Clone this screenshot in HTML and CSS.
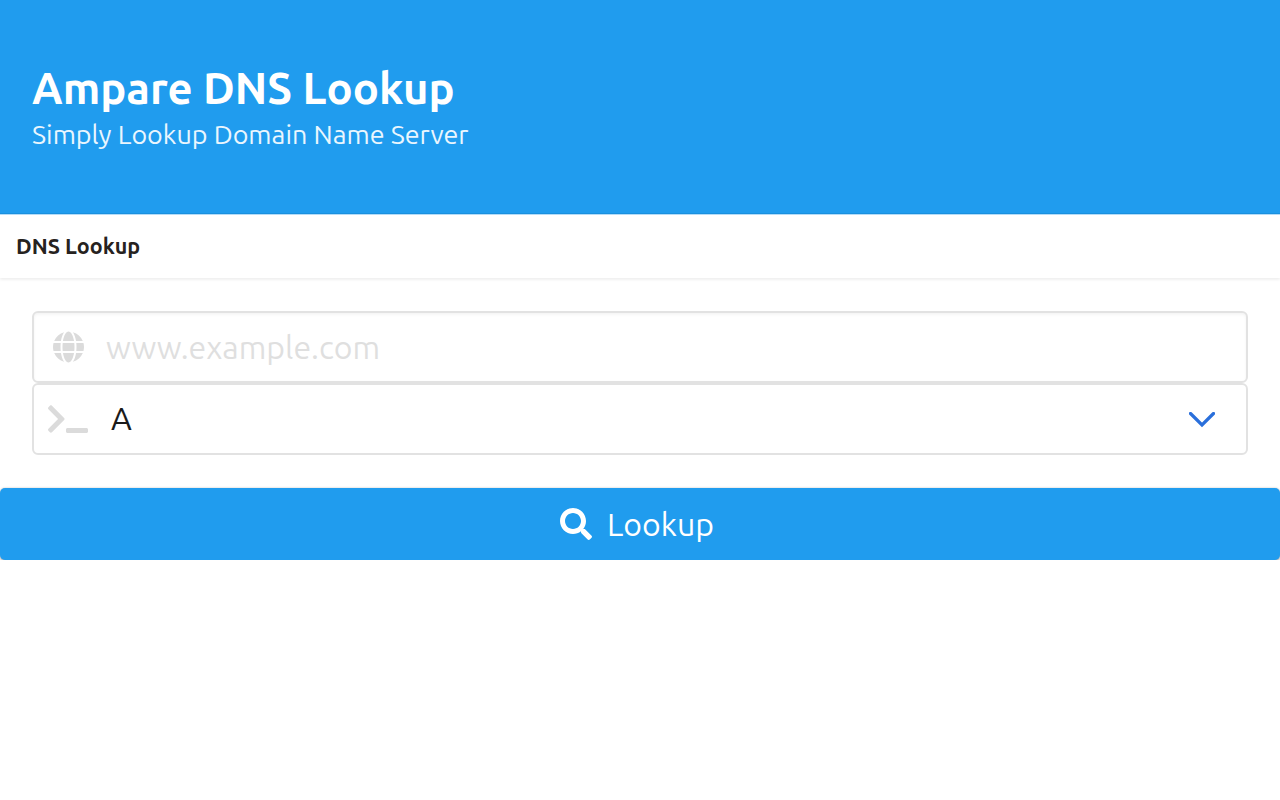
FILE: index.html
```html
<!DOCTYPE html>
<html lang="en">
<head>
<meta charset="utf-8">
<title>Ampare DNS Lookup</title>
<link rel="stylesheet" href="styles.css">
</head>
<body>
<header class="hero">
  <h1 class="hero-title">Ampare DNS Lookup</h1>
  <p class="hero-sub">Simply Lookup Domain Name Server</p>
</header>
<nav class="tabbar"><span class="tab">DNS Lookup</span></nav>
<main class="form">
  <div class="field field-input">
    <span class="icon-left"><svg viewBox="0 0 496 512" width="31" height="32"><path fill="#dbdbdb" d="M336.500 160C322 70.700 287.800 8 248 8s-74 62.700-88.500 152h177zM152 256c0 22.200 1.200 43.500 3.300 64h185.300c2.100-20.500 3.300-41.800 3.300-64s-1.200-43.500-3.300-64H155.300c-2.100 20.500-3.300 41.800-3.300 64zm324.700-96c-28.600-67.900-86.500-120.400-158-141.600 24.400 33.800 41.200 84.700 50 141.600h108zM177.200 18.400C105.800 39.600 47.800 92.100 19.300 160h108c8.700-56.900 25.500-107.800 49.900-141.600zM487.400 192H372.700c2.100 21 3.300 42.500 3.300 64s-1.200 43-3.300 64h114.600c5.500-20.500 8.600-41.800 8.600-64s-3.100-43.500-8.500-64zM120 256c0-21.500 1.200-43 3.300-64H8.600C3.200 212.500 0 233.800 0 256s3.200 43.500 8.600 64h114.600c-2-21-3.200-42.500-3.200-64zm39.500 96c14.500 89.300 48.700 152 88.500 152s74-62.700 88.500-152h-177zm159.300 141.600c71.400-21.200 129.400-73.700 158-141.600h-108c-8.800 56.900-25.600 107.800-50 141.600zM19.300 352c28.600 67.900 86.500 120.400 158 141.600-24.400-33.800-41.200-84.700-50-141.600h-108z"/></svg></span>
    <input class="input" type="text" placeholder="www.example.com">
  </div>
  <div class="field">
    <span class="icon-left"><svg viewBox="0 0 640 512" width="40" height="32"><path fill="#dbdbdb" d="M257.981 272.971L63.638 467.314c-9.373 9.373-24.569 9.373-33.941 0L7.029 444.647c-9.357-9.357-9.375-24.522-.04-33.901L161.011 256 6.990 101.255c-9.335-9.379-9.317-24.544.04-33.901l22.667-22.667c9.373-9.373 24.569-9.373 33.941 0L257.981 239.030c9.373 9.372 9.373 24.568 0 33.941zM640 456v-32c0-13.255-10.745-24-24-24H312c-13.255 0-24 10.745-24 24v32c0 13.255 10.745 24 24 24h304c13.255 0 24-10.745 24-24z"/></svg></span>
    <span class="select-value">A</span>
    <svg class="chevron" viewBox="0 0 26 16" width="26" height="16"><path d="M1.500 1.500 L13 13 L24.500 1.500" fill="none" stroke="#2a6fdb" stroke-width="3.200" stroke-linecap="round"/></svg>
  </div>
</main>
<button class="lookup" type="button">
  <svg viewBox="0 0 512 512" width="32" height="32"><path fill="#fff" d="M505 442.700L405.300 343c-4.500-4.500-10.600-7-17-7H372c27.600-35.300 44-79.700 44-128C416 93.100 322.900 0 208 0S0 93.100 0 208s93.100 208 208 208c48.300 0 92.700-16.400 128-44v16.300c0 6.400 2.500 12.500 7 17l99.700 99.700c9.400 9.400 24.600 9.400 33.900 0l28.300-28.300c9.400-9.400 9.400-24.600.1-34zM208 336c-70.700 0-128-57.200-128-128 0-70.700 57.200-128 128-128 70.700 0 128 57.200 128 128 0 70.700-57.200 128-128 128z"/></svg>
  <span>Lookup</span>
</button>
</body>
</html>
```
FILE: styles.css
```css
* { box-sizing: border-box; }
html, body { margin: 0; padding: 0; background: #fff; }
body { font-family: Ubuntu, "Noto Sans", "Open Sans", sans-serif; color: #222; }
.hero { height: 214px; background: #209cee; color: #fff; padding: 64px 32px 0; border-bottom: 1px solid #1a90de; }
.hero-title { margin: 0; font-size: 43.600px; line-height: 48px; font-weight: 700; }
.hero-sub { margin: 7px 0 0; font-size: 26.900px; line-height: 30px; font-weight: 400; color: #eaf6fe; }
.tabbar { height: 64px; padding: 0 16px 1px; display: flex; align-items: center; border-top: 1px solid #b4dcf8; box-shadow: 0 1.600px 3px rgba(10,10,10,.08); }
.tab { font-size: 21.500px; font-weight: 700; color: #262220; }
.form { padding: 33px 32px 33px; }
.field { height: 72px; border: 2px solid #e2e2e2; border-radius: 6px; display: flex; align-items: center; padding: 0 30px 0 14px; }
.field-input { box-shadow: inset 0 1.600px 3px rgba(10,10,10,.05); }
.icon-left { flex: none; width: 40px; height: 32px; margin-right: 18px; display: flex; justify-content: center; }
.input { flex: 1; min-width: 0; background: transparent; border: 0; outline: 0; font: 400 32px Ubuntu, "Noto Sans", sans-serif; padding: 0; color: #222; }
.input::placeholder { color: #dfdfdf; opacity: 1; }
.select-value { flex: 1; margin-left: 5px; margin-top: -2px; font-size: 32px; font-weight: 400; color: #1a1a1a; }
.chevron { margin-right: 1px; margin-top: 2px; }
.lookup { width: 100%; height: 72px; border: 0; padding: 0 6px 0 0; border-radius: 5px; background: #209cee; color: #fff; display: flex; align-items: center; justify-content: center; gap: 15px; font: 400 32px Ubuntu, "Noto Sans", sans-serif; box-shadow: 0 1.600px 3px rgba(10,10,10,.3), 0 0 2px rgba(10,10,10,.12); }
```
